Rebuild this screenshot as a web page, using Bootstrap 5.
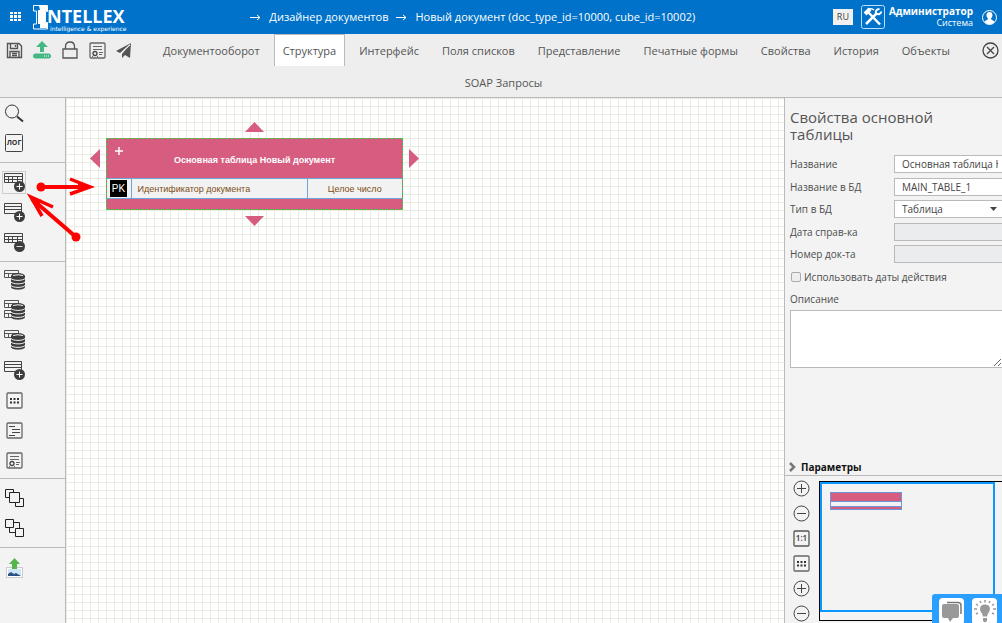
<!DOCTYPE html>
<html lang="ru">
<head>
<meta charset="utf-8">
<meta name="viewport" content="width=device-width, initial-scale=1">
<title>Intellex — Дизайнер документов</title>
<link href="https://cdn.jsdelivr.net/npm/bootstrap@5.3.0/dist/css/bootstrap.min.css" rel="stylesheet">
<style>
  body { font-family: "Open Sans", "Noto Sans", sans-serif; font-size: 10px; line-height: 14px; color: #4d4d4d; background: #f3f3f3; }
  svg { display: block; flex: none; }
  button { padding: 0; border: 0; background: transparent; color: inherit; }
  .topbar { height: 34px; background: #0072c9; color: #fff; padding-left: 9px; padding-right: 4px; }
  .topbar a { color: #fff; text-decoration: none; font-size: 11px; font-weight: 500; }
  .logo-cell { width: 24%; }
  .brand-mark { width: 17px; height: 25px; }
  .brand-name { font-size: 18px; font-weight: 700; line-height: 19px; margin-left: -3px; }
  .brand-sub { font: 6px/6px "DejaVu Sans", sans-serif; }
  .lang-btn { width: 20px; height: 16px; background: #f0f0f0; color: #444; font-size: 9px; line-height: 14px; }
  .user-info { font-size: 9px; line-height: 12px; text-align: right; font-weight: 500; }
  .user-info b { display: block; font-size: 10px; font-weight: 700; }
  .toolbar { background: #eee; border-bottom: 1px solid #bababa; padding-left: 6px; text-align: center; height: 64px; }
  .tool-icons { width: 132px; height: 32px; gap: 10px; }
  .tool-close { width: 26px; height: 32px; padding-left: 6px; }
  .tab-link { display: inline-block; padding: 8px 8px 7px; border: 1px solid transparent; border-bottom: 0; margin: 0 3px 0 2px; font-size: 11px; line-height: 16px; color: #555; text-decoration: none; height: 32px; }
  .tab-link.chosen { background: #fff; border-color: #bababa; }
  .tab-row { font-size: 0; line-height: 0; }
  .side { width: 66px; border-right: 1px solid #bababa; background: #f3f3f3; }
  .side-group { border-bottom: 1px solid #bababa; padding: 4px 3px; }
  .side-group.tight { padding: 3px; }
  .side-group:first-child { padding-top: 0; padding-bottom: 4px; }
  .side-group:last-child { border-bottom: 0; }
  .side-group button { height: 30px; width: 24px; display: flex; align-items: center; }
  .side-group .picked svg { box-shadow: 0 0 0 1px #ccc; }
  .board { position: relative; overflow: hidden; background-color: #fff;
    background-image: linear-gradient(#e9eddf 1px, transparent 1px), linear-gradient(90deg, #e9eddf 1px, transparent 1px); background-size: 8px 8px; }
  .entity { position: absolute; left: 40px; top: 40px; width: 297px; background: #d65c80; border: 1px dashed #2fd13f; font-family: "Liberation Sans", Arial, sans-serif; font-size: 9px; }
  .entity-head { height: 39px; padding-top: 14px; color: #fff; text-align: center; position: relative; font-weight: 700; }
  .entity-plus { position: absolute; left: 7px; top: 7px; }
  .entity table { width: 100%; border-collapse: collapse; color: #7d4e14; }
  .entity td { background: #f2f2f2; border: 1px solid #6fa5d8; height: 20px; padding: 0 6px; line-height: 12px; }
  .entity td.key { width: 24px; padding: 0 0 0 3px; border-left: 0; }
  .entity td.kind { width: 95px; text-align: center; border-right: 0; }
  .pk { display: block; width: 17px; height: 17px; background: #000; color: #fff; font-size: 10px; line-height: 17px; text-align: center; }
  .entity-foot { height: 10px; }
  .handle { position: absolute; fill: #d65c80; }
  .marks { position: absolute; left: 0; top: 0; pointer-events: none; }
  .props { width: 218px; border-left: 1px solid #bababa; background: #f3f3f3; overflow: hidden; }
  .props-form { padding: 11px 0 0 5px; }
  .props h1 { font-size: 15px; line-height: 17px; margin: 0 40px 9px 0; color: #555; font-weight: 400; }
  .field-row { height: 22px; }
  .field-row.tall { height: 23px; }
  .field-row label { width: 104px; flex: none; }
  .field-row input, .field-row select { flex: 1; min-width: 0; height: 18px; border: 1px solid #bababa; border-right: 0; border-radius: 0; background: #fff; color: #444; font-size: 10px; line-height: 14px; padding: 0 4px 0 7px; }
  .field-row input:disabled { background: #ebecee; }
  .field-row select { appearance: none; background: #fff url("data:image/svg+xml,%3Csvg xmlns='http://www.w3.org/2000/svg' width='7' height='4'%3E%3Cpath d='M0 0h7L3.5 4z' fill='%23444'/%3E%3C/svg%3E") no-repeat right 5px center; }
  .field-row input[type=checkbox] { flex: none; width: 10px; height: 10px; margin: 0 3px 0 1px; padding: 0; appearance: none; border: 1px solid #aaa; border-radius: 2px; background: #eee; }
  .field-row label.wide { width: auto; }
  .note { display: block; width: 100%; height: 58px; border: 1px solid #bababa; border-right: 0; background: #fff; }
  .params { height: 18px; border-bottom: 1px solid #bababa; color: #111; font-weight: 700; font-size: 10px; padding-left: 4px; gap: 4px; width: 100%; }
  .zoom-list { width: 34px; padding: 4px 0 0 8px; }
  .zoom-list button { height: 25px; display: flex; align-items: flex-start; }
  .map-area { height: 147px; }
  .mini { margin-top: 5px; height: 140px; border: 1px solid #000; border-right: 0; }
  .mini-view { margin-right: 7px; height: 130px; border: 2px solid #0a98ff; padding: 8px; }
  .mini-entity { width: 72px; height: 18px; border: 1px solid #6f97d8; background: #d65c80; padding-top: 8px; }
  .mini-entity div { height: 6px; border: solid #6f97d8; border-width: 1px 0; background: #f3f3f3; }
  .helper { position: fixed; right: 0; bottom: 0; width: 70px; height: 29px; background: #2a9fff; border-radius: 3px 0 0 0; padding: 4px 0 0 7px; gap: 8px; overflow: hidden; }
  .helper button { width: 25px; height: 27px; background: #fff; border-radius: 4px; }
</style>
</head>
<body class="d-flex flex-column vh-100 overflow-hidden">

<svg width="0" height="0" class="position-absolute" aria-hidden="true">
  <defs>
    <g id="i-grid" fill="none" stroke="#444"><path d="M.5 1.500h18v9H.5zM.5 4.500h18M.5 7.500h18M4.500 4.500v6M8.500 4.500v6M13.500 4.500v6"/></g>
    <g id="i-rows" fill="none" stroke="#444"><path d="M.5 1.500h17v10H.5zM.5 4.500h17M.5 7.500h17"/></g>
    <g id="i-add"><circle cx="15.500" cy="14.500" r="5.500" fill="#3d3d3d"/><path d="M15.500 11.500v6M12.500 14.500h6" stroke="#fff"/></g>
    <g id="i-sub"><circle cx="15.500" cy="14.500" r="5.500" fill="#3d3d3d"/><path d="M12.500 14.500h6" stroke="#ddd"/></g>
    <g id="i-db"><path d="M7 7v11c0 3.500 14 3.500 14 0V7z" fill="#3d3d3d"/><ellipse cx="14" cy="7" rx="7" ry="3" fill="#3d3d3d"/><path d="M9 6.500q5-1.500 10 0M7 9.500c2 2.500 12 2.500 14 0M7 13c2 2.500 12 2.500 14 0M7 16.500c2 2.500 12 2.500 14 0" fill="none" stroke="#f3f3f3" stroke-width="1"/></g>
    <g id="i-mini" fill="none" stroke="#555"><path d="M.5 1.500h14v7H.5zM.5 4.500h14M4.500 4.500v4M8.500 4.500v4"/></g>
    <g id="i-dots"><rect x="1" y="1" width="15" height="15" rx="1" fill="#f5f5f5" stroke="#666" stroke-width="1.300"/><path d="M4 6h2v2H4zM7.500 6h2v2h-2zM11 6h2v2h-2zM4 9.500h2v2H4zM7.500 9.500h2v2h-2zM11 9.500h2v2h-2z" fill="#333"/></g>
    <g id="i-doc" fill="none" stroke="#666"><rect x="1" y="1" width="15" height="15" rx="1" stroke-width="1.300"/><path d="M4 4.500h9M4 7.500h9M10 10.500h4M10 12.500h3"/><circle cx="6" cy="11.500" r="2" stroke="#444" stroke-width="1.300"/><path d="M3 14.500h1M8 14.500h1"/></g>
    <g id="i-plus" fill="none" stroke="#444"><circle cx="8.500" cy="8.500" r="7.500"/><path d="M8.500 4v9M4 8.500h9"/></g>
    <g id="i-minus" fill="none" stroke="#444"><circle cx="8.500" cy="8.500" r="7.500"/><path d="M4 8.500h9"/></g>
  </defs>
</svg>

<header class="topbar d-flex align-items-center">
  <div class="logo-cell d-flex align-items-center">
    <button aria-label="Меню"><svg width="12" height="10" fill="#fff"><path d="M1 0h3v2H1zM5 0h3v2H5zM9 0h3v2H9zM1 3h3v3H1zM5 3h3v3H5zM9 3h3v3H9zM1 7h3v2H1zM5 7h3v2H5zM9 7h3v2H9z"/></svg></button>
    <a href="#" class="d-flex align-items-center ms-2 ps-1" aria-label="Intellex">
      <svg class="brand-mark" viewBox="0 0 17 25"><path d="M.5.500h14v6h-2v11h2v6.500H.5v-5h3v-13h-3z" fill="none" stroke="#fff"/><path d="M6 1h8v5h-2v12h2v5H7v-4H5V5h2z" fill="#fff"/></svg>
      <span class="d-flex flex-column pt-1">
        <span class="brand-name">NTELLEX</span>
        <span class="brand-sub">intelligence &amp; experience</span>
      </span>
    </a>
  </div>
  <nav class="d-flex flex-grow-1 gap-2 ps-1" aria-label="Путь">
    <svg width="11" height="14" fill="none" stroke="#fff"><path d="M0 7.500h10M7 5l3 2.500L7 10"/></svg>
    <a href="#">Дизайнер документов</a>
    <svg width="11" height="14" fill="none" stroke="#fff"><path d="M0 7.500h10M7 5l3 2.500L7 10"/></svg>
    <a href="#">Новый документ (doc_type_id=10000, cube_id=10002)</a>
  </nav>
  <div class="d-flex align-items-center">
    <button class="lang-btn me-2">RU</button>
    <svg width="24" height="24" fill="none" stroke="#fff"><rect x=".5" y=".5" width="23" height="23" rx="2" stroke="#bfe0fa"/><path d="M7 7l12 12.500M5 19L16 8" stroke-width="2.500"/><path d="M4 9l5-5" stroke-width="4"/><path d="M8 4q3-1 5 1" stroke-width="1.500"/><path d="M18.500 4Q14 4.500 15 8.500q4 2 5.500-2" stroke-width="2"/></svg>
    <div class="user-info ms-1"><b>Администратор</b>Система</div>
    <button class="ms-2" aria-label="Профиль"><svg width="17" height="17"><circle cx="8.500" cy="8.500" r="7" fill="none" stroke="#fff"/><path d="M8.500 3c4 0 3.500 5 1.500 6.500 0 2 3 1.500 3.500 3.500-2.500 3-7.500 3-10 0 .5-2 3.500-1.500 3.500-3.500C5 8 4.500 3 8.500 3z" fill="#fff"/></svg></button>
  </div>
</header>

<div class="toolbar">
  <div class="tool-icons float-start d-flex align-items-center">
    <button aria-label="Сохранить"><svg width="17" height="17" fill="none" stroke="#555" stroke-width="1.400"><path d="M1.500 1.500h11.500l2.500 2.500v11.500H1.500zM4.500 1.500v5h7v-5M4 15.500V9.500h9v6M9.500 3v2M6 11.500h5M6 13.500h5"/></svg></button>
    <button aria-label="Выгрузить"><svg width="18" height="18" fill="#43b883"><path d="M9 0l6 6h-4v5H7V6H3z"/><rect y="12.500" width="18" height="5" rx="2.500"/><path d="M11 15h1M13 15h1M15 15h1" stroke="#fff"/></svg></button>
    <button aria-label="Заблокировать"><svg width="18" height="18" fill="none" stroke="#555" stroke-width="1.300"><path d="M2 8h14v9H2zM4.500 8V5.500q0-4.500 4.500-4.500t4.500 4.500V8"/></svg></button>
    <button aria-label="Отчет"><svg width="17" height="17"><use href="#i-doc"/></svg></button>
    <button aria-label="Отправить"><svg width="16" height="15"><path d="M15 0L0 8l4 2zM15 0L6 11v4l3-3 5 3z" fill="#555"/><path d="M14 2L5 10" stroke="#eee"/></svg></button>
  </div>
  <div class="tool-close float-end d-flex align-items-center"><button aria-label="Закрыть"><svg width="17" height="17" fill="none" stroke="#444" stroke-width="1.300"><circle cx="8.500" cy="8.500" r="7.500"/><path d="M5 5l7 7M12 5l-7 7"/></svg></button></div>
  <nav class="tab-row">
    <a class="tab-link" href="#">Документооборот</a>
    <a class="tab-link chosen" href="#">Структура</a>
    <a class="tab-link" href="#">Интерфейс</a>
    <a class="tab-link" href="#">Поля списков</a>
    <a class="tab-link" href="#">Представление</a>
    <a class="tab-link" href="#">Печатные формы</a>
    <a class="tab-link" href="#">Свойства</a>
    <a class="tab-link" href="#">История</a>
    <a class="tab-link" href="#">Объекты</a>
    <a class="tab-link" href="#">SOAP Запросы</a>
  </nav>
</div>

<main class="d-flex flex-grow-1 position-relative" style="min-height:0">
  <aside class="side flex-shrink-0">
    <div class="side-group">
      <button aria-label="Поиск"><svg width="22" height="20" fill="none" stroke="#333"><circle cx="9" cy="8.500" r="6.500"/><path d="M14 13.500l6 5" stroke-width="2"/></svg></button>
      <button aria-label="Лог"><svg width="22" height="20"><rect x="2.500" y="1.500" width="17" height="17" rx="1" fill="none" stroke="#444"/><text x="11" y="12" text-anchor="middle" font-size="7" font-weight="700" fill="#333">ЛОГ</text></svg></button>
    </div>
    <div class="side-group">
      <button class="picked" aria-label="Добавить таблицу"><svg width="22" height="21" viewBox="-1 0 22 21"><use href="#i-grid"/><use href="#i-add"/></svg></button>
      <button aria-label="Добавить представление"><svg width="22" height="21" viewBox="-1 0 22 21"><use href="#i-rows"/><use href="#i-add"/></svg></button>
      <button aria-label="Удалить таблицу"><svg width="22" height="21" viewBox="-1 0 22 21"><use href="#i-grid"/><use href="#i-sub"/></svg></button>
    </div>
    <div class="side-group tight">
      <button aria-label="Таблица в базу"><svg width="23" height="22" viewBox="-1 0 23 22"><use href="#i-mini"/><use href="#i-db"/></svg></button>
      <button aria-label="Все таблицы в базу"><svg width="23" height="22" viewBox="-1 0 23 22"><use href="#i-mini"/><use href="#i-mini" y="10"/><use href="#i-db"/></svg></button>
      <button aria-label="Обновить в базе"><svg width="23" height="22" viewBox="-1 0 23 22"><use href="#i-mini"/><use href="#i-db"/></svg></button>
      <button aria-label="Добавить строку"><svg width="22" height="21" viewBox="-1 0 22 21"><use href="#i-rows"/><use href="#i-add"/></svg></button>
      <button aria-label="Сетка"><svg width="22" height="17" viewBox="-3 0 22 17"><use href="#i-dots"/></svg></button>
      <button aria-label="Структура"><svg width="22" height="17" viewBox="-3 0 22 17" fill="none" stroke="#444"><rect x="1" y="1" width="15" height="15" rx="1" stroke="#666" stroke-width="1.300"/><path d="M3 4.500h6M6 7.500h8M6 10.500h8M3 13.500h6"/></svg></button>
      <button aria-label="Отчет"><svg width="22" height="17" viewBox="-3 0 22 17"><use href="#i-doc"/></svg></button>
    </div>
    <div class="side-group">
      <button aria-label="На передний план"><svg width="22" height="19" fill="#f3f3f3" stroke="#222"><path d="M2.500.500h8v8h-8z"/><path d="M12.500 9.500h8v8h-8z"/><path d="M6.500 3.500h10v10h-10z"/></svg></button>
      <button aria-label="На задний план"><svg width="22" height="19" fill="#f3f3f3" stroke="#222"><path d="M6.500 3.500h10v10h-10z"/><path d="M2.500.500h8v8h-8z"/><path d="M12.500 9.500h8v8h-8z"/></svg></button>
    </div>
    <div class="side-group">
      <button aria-label="Экспорт изображения"><svg width="22" height="21"><rect x="3.500" y="10.500" width="16" height="10" fill="#fff" stroke="#ccc"/><path d="M5 12h13v7H5z" fill="#cfe4f5"/><path d="M5 19v-2l3-2 3 2 2-1 5 3z" fill="#2c5283"/><path d="M11.500 1l5.500 6h-3v5H9V7H6z" fill="#56b64d"/></svg></button>
    </div>
  </aside>

  <section class="board flex-grow-1" aria-label="Схема">
    <svg class="handle" style="left:179px;top:24px" width="19" height="10"><path d="M9.500 0L19 10H0z"/></svg>
    <svg class="handle" style="left:179px;top:118px" width="19" height="10"><path d="M0 0h19L9.500 10z"/></svg>
    <svg class="handle" style="left:24px;top:51px" width="10" height="19"><path d="M10 0v19L0 9.500z"/></svg>
    <svg class="handle" style="left:343px;top:51px" width="10" height="19"><path d="M0 0v19l10-9.500z"/></svg>
    <div class="entity">
      <div class="entity-head"><svg class="entity-plus" width="10" height="10"><path d="M5 1v8M1 5h8" stroke="#fff" stroke-width="1.500"/></svg>Основная таблица Новый документ</div>
      <table><tbody><tr><td class="key"><span class="pk">PK</span></td><td>Идентификатор документа</td><td class="kind">Целое число</td></tr></tbody></table>
      <div class="entity-foot"></div>
    </div>
  </section>

  <aside class="props flex-shrink-0 d-flex flex-column">
    <form class="props-form flex-grow-1">
      <h1>Свойства основной таблицы</h1>
      <div class="field-row tall d-flex align-items-center"><label for="f1">Название</label><input id="f1" type="text" value="Основная таблица Новый документ"></div>
      <div class="field-row tall d-flex align-items-center"><label for="f2">Название в БД</label><input id="f2" type="text" value="MAIN_TABLE_1"></div>
      <div class="field-row d-flex align-items-center"><label for="f3">Тип в БД</label><select id="f3"><option>Таблица</option></select></div>
      <div class="field-row tall d-flex align-items-center"><label for="f4">Дата справ-ка</label><input id="f4" type="text" disabled></div>
      <div class="field-row d-flex align-items-center"><label for="f5">Номер док-та</label><input id="f5" type="text" disabled></div>
      <div class="field-row tall d-flex align-items-center"><input id="f6" type="checkbox"><label class="wide" for="f6">Использовать даты действия</label></div>
      <div class="field-row d-flex align-items-center"><label for="f7">Описание</label></div>
      <textarea id="f7" class="note"></textarea>
    </form>
    <button class="params d-flex align-items-center"><svg width="8" height="10" fill="none" stroke="#777" stroke-width="2.500"><path d="M1 1l4 4-4 4"/></svg>Параметры</button>
    <div class="map-area d-flex">
      <div class="zoom-list">
        <button aria-label="Увеличить"><svg width="17" height="17"><use href="#i-plus"/></svg></button>
        <button aria-label="Уменьшить"><svg width="17" height="17"><use href="#i-minus"/></svg></button>
        <button aria-label="Масштаб 1:1"><svg width="17" height="17"><rect x="1" y="1" width="15" height="15" rx="1" fill="none" stroke="#555" stroke-width="1.300"/><text x="8.500" y="11" text-anchor="middle" font-size="8" font-weight="600" fill="#333">1:1</text></svg></button>
        <button aria-label="Сетка"><svg width="17" height="17"><use href="#i-dots"/></svg></button>
        <button aria-label="Увеличить шаг"><svg width="17" height="17"><use href="#i-plus"/></svg></button>
        <button aria-label="Уменьшить шаг"><svg width="17" height="17"><use href="#i-minus"/></svg></button>
      </div>
      <div class="mini flex-grow-1"><div class="mini-view"><div class="mini-entity"><div></div></div></div></div>
    </div>
  </aside>

  <svg class="marks" width="110" height="160" fill="none" stroke="#f00" stroke-width="4">
    <circle cx="41" cy="89" r="4.500" fill="#f00" stroke="none"/><path d="M40 89h48"/><path d="M70 81l20 8-20 7" stroke-width="3.500"/><path d="M78 85l16 4-16 4z" fill="#f00" stroke="none"/>
    <circle cx="76" cy="139" r="4.500" fill="#f00" stroke="none"/><path d="M76 139L32 101"/><path d="M53 109L31 99l11 19" stroke-width="3.500"/><path d="M28 97l14 5-6 7z" fill="#f00" stroke="none"/>
  </svg>
</main>

<div class="helper d-flex">
  <button aria-label="Чат"><svg width="25" height="25"><path d="M8 3.500h11q3 0 3 3V15" fill="none" stroke="#777" stroke-width="1.500"/><path d="M5 5h13q2 0 2 2v10q0 2-2 2h-4l-3 4-2-4H5q-2 0-2-2V7q0-2 2-2z" fill="#999"/></svg></button>
  <button aria-label="Подсказка"><svg width="25" height="25"><path d="M13 5.500c6 0 6 6 3 9l-1 3h-4l-1-3c-3-3-3-9 3-9zM11 19h4v3l-2 1.500L11 22z" fill="#999"/><path d="M13 1v2.500M8 2l1 2M18 2l-1 2M4 5l2 1.500M22 5l-2 1.500M2 10h3M21 10h3M4 15l2-1M22 15l-2-1" stroke="#999" stroke-width="1.500"/></svg></button>
</div>

<script src="https://cdn.jsdelivr.net/npm/bootstrap@5.3.0/dist/js/bootstrap.bundle.min.js"></script>
</body>
</html>
